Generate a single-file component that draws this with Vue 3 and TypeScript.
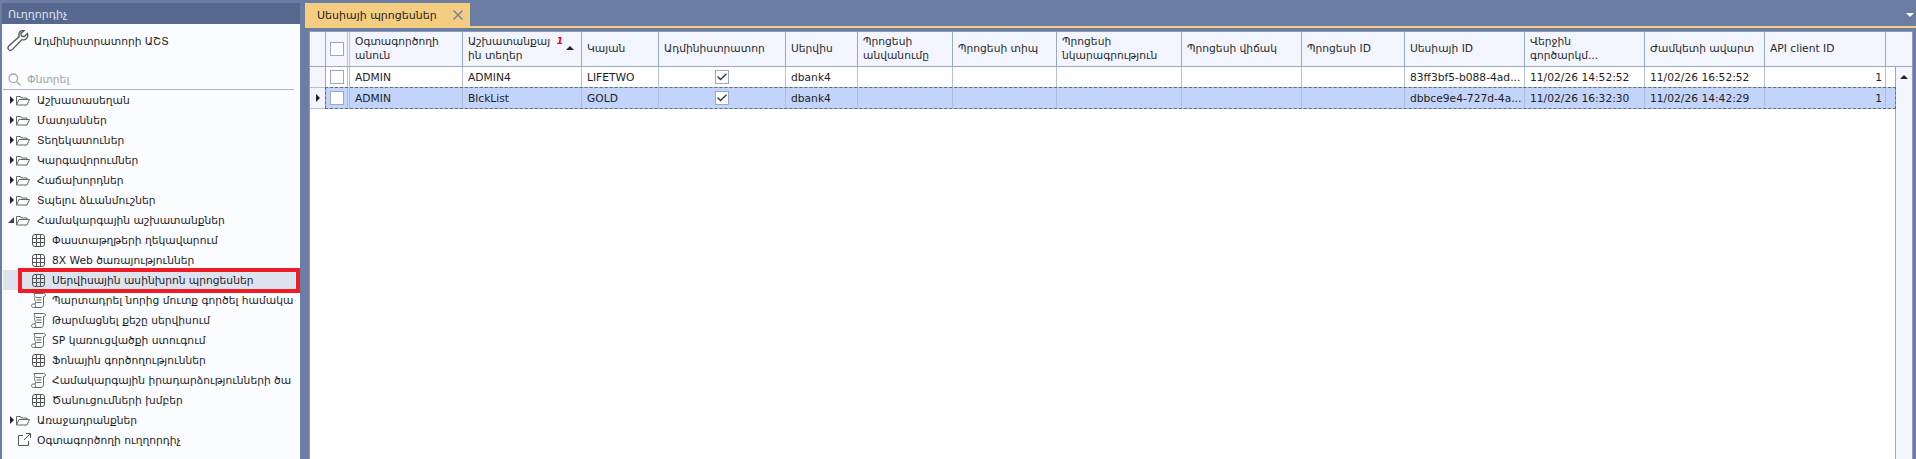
<script setup lang="ts">
interface Item { label: string; kind: 'folder' | 'open' | 'grid' | 'script' | 'link'; active?: boolean }
const items: Item[] = [
  { label: 'Աշխատասեղան', kind: 'folder' },
  { label: 'Մատյաններ', kind: 'folder' },
  { label: 'Տեղեկատուներ', kind: 'folder' },
  { label: 'Կարգավորումներ', kind: 'folder' },
  { label: 'Հաճախորդներ', kind: 'folder' },
  { label: 'Տպելու ձևանմուշներ', kind: 'folder' },
  { label: 'Համակարգային աշխատանքներ', kind: 'open' },
  { label: 'Փաստաթղթերի ղեկավարում', kind: 'grid' },
  { label: '8X Web ծառայություններ', kind: 'grid' },
  { label: 'Սերվիսային ասինխրոն պրոցեսներ', kind: 'grid', active: true },
  { label: 'Պարտադրել նորից մուտք գործել համակա', kind: 'script' },
  { label: 'Թարմացնել քեշը սերվիսում', kind: 'script' },
  { label: 'SP կառուցվածքի ստուգում', kind: 'script' },
  { label: 'Ֆոնային գործողություններ', kind: 'grid' },
  { label: 'Համակարգային իրադարձությունների ծա', kind: 'script' },
  { label: 'Ծանուցումների խմբեր', kind: 'grid' },
  { label: 'Առաջադրանքներ', kind: 'folder' },
  { label: 'Օգտագործողի ուղղորդիչ', kind: 'link' },
]
interface Col { w: number; title: string; sort?: boolean; check?: boolean; right?: boolean }
const cols: Col[] = [
  { w: 113, title: 'Օգտագործողի անուն' },
  { w: 119, title: 'Աշխատանքայ ին տեղեր', sort: true },
  { w: 77, title: 'Կայան' },
  { w: 127, title: 'Ադմինիստրատոր', check: true },
  { w: 72, title: 'Սերվիս' },
  { w: 95, title: 'Պրոցեսի անվանումը' },
  { w: 104, title: 'Պրոցեսի տիպ' },
  { w: 125, title: 'Պրոցեսի նկարագրություն' },
  { w: 120, title: 'Պրոցեսի վիճակ' },
  { w: 103, title: 'Պրոցեսի ID' },
  { w: 120, title: 'Սեսիայի ID' },
  { w: 120, title: 'Վերջին գործարկմ...' },
  { w: 120, title: 'Ժամկետի ավարտ' },
  { w: 121, title: 'API client ID', right: true },
]
const rows: string[][] = [
  ['ADMIN', 'ADMIN4', 'LIFETWO', '', 'dbank4', '', '', '', '', '', '83ff3bf5-b088-4ad...', '11/02/26 14:52:52', '11/02/26 16:52:52', '1'],
  ['ADMIN', 'BlckList', 'GOLD', '', 'dbank4', '', '', '', '', '', 'dbbce9e4-727d-4a...', '11/02/26 16:32:30', '11/02/26 14:42:29', '1'],
]
</script>

<template>
  <div class="app">
    <aside class="nav">
      <div class="nav-title">Ուղղորդիչ</div>
      <div class="nav-body">
        <div class="module">
          <svg width="22" height="22" viewBox="0 0 22 22" fill="none" stroke="#555" stroke-width="1.3"><path d="M20.500 3.500l-3.500 3.200-2.600-.7-.6-2.600L17.100.6c-2.600-.7-5.300 1-5.200 4 0 .8.2 1.400.4 1.900L2 15.800c-1.300 1.300-1.200 2.800-.3 3.800s2.600 1.100 3.800-.2l9.500-9.800c.7.3 1.300.4 2 .3 2.900-.2 4.300-3.600 3.500-6.400z"/></svg>
          <span>Ադմինիստրատորի ԱՇՏ</span>
        </div>
        <div class="search">
          <svg width="13" height="13" viewBox="0 0 13 13" fill="none" stroke="#a9a9a9" stroke-width="1.3"><circle cx="5.300" cy="5.300" r="4.300"/><path d="M8.500 8.500l4 4"/></svg>
          <span>Փնտրել</span>
        </div>
        <ul class="tree">
          <li v-for="it in items" :key="it.label" class="node" :class="['k-' + it.kind, { active: it.active }]">
            <i v-if="it.kind === 'folder'" class="arrow"></i>
            <i v-else-if="it.kind === 'open'" class="arrow-open"></i>
            <svg v-if="it.kind === 'folder' || it.kind === 'open'" class="ico" width="14" height="11" viewBox="0 0 14 11" fill="none" stroke="#666"><path d="M.5 10V1.500h4l1 1.500h5.500v1.500M.5 10h10.500l2.500-5.500H3z"/></svg>
            <svg v-else-if="it.kind === 'grid'" class="ico" width="13" height="13" viewBox="0 0 13 13" fill="none" stroke="#555"><rect x=".5" y=".5" width="12" height="12" rx="2.500"/><path d="M4.500 1v11M8.500 1v11M1 4.500h11M1 8.500h11"/></svg>
            <svg v-else-if="it.kind === 'script'" class="ico" width="15" height="15" viewBox="0 0 15 15" fill="none" stroke="#666"><path d="M3 .5h9.500c1.200 0 2 .8 2 1.700s-.8 1.300-2 1.300V11c0 2-1 3.500-2.500 3.500H2.500C1.300 14.500.5 13.700.5 12.700s.8-1.700 2-1.700H4c.8-1 .8-2.500 0-3.500-.6-1-.6-2.500 0-3.500-.3-.8-.3-2.500-1-3.500zM5 4.500h5.500M5.500 7h5M5.500 9.500h5M4 11c.8.8.8 2.500 0 3.500"/></svg>
            <svg v-else class="ico" width="14" height="14" viewBox="0 0 14 14" fill="none" stroke="#555"><path d="M6 2.500H1.500v10h10V8M7 7l6-6M9 .5h4.500V5"/></svg>
            <span class="label">{{ it.label }}</span>
          </li>
        </ul>
      </div>
    </aside>
    <main class="main">
      <div class="tabbar">
        <div class="tab">
          <span class="tab-text">Սեսիայի պրոցեսներ</span>
          <svg width="10" height="10" viewBox="0 0 10 10" fill="none" stroke="#7484a8" stroke-width="1.500"><path d="M.5.5l9 9M9.500.5l-9 9"/></svg>
        </div>
        <i class="menu"></i>
      </div>
      <div class="tabline"></div>
      <div class="page">
        <div class="grid">
          <div class="tr head">
            <div class="ind"></div>
            <div class="chk"><b class="box"></b></div>
            <div v-for="(c, i) in cols" :key="i" class="th" :class="{ 'th-sort': c.sort }" :style="{ width: c.w + 'px' }">
              <span class="th-text">{{ c.title }}</span>
              <template v-if="c.sort"><em class="badge">1</em><i class="sort"></i></template>
            </div>
            <div class="sb-head"></div>
          </div>
          <div class="body-wrap">
            <div class="rows">
              <div v-for="(r, ri) in rows" :key="ri" class="tr row">
                <div class="ind"><i v-if="ri === 1" class="cur"></i></div>
                <div class="row-main" :class="{ sel: ri === 1 }">
                  <div class="chk"><b class="box"></b></div>
                  <div v-for="(c, i) in cols" :key="i" class="td" :class="{ right: c.right, center: c.check }" :style="{ width: c.w + 'px' }">
                    <b v-if="c.check" class="box">
                      <svg width="10" height="8" viewBox="0 0 10 8" fill="none" stroke="#333" stroke-width="1.300"><path d="M.5 3.500l3 3L9.500.8"/></svg>
                    </b>
                    <template v-else>{{ r[i] }}</template>
                  </div>
                </div>
              </div>
            </div>
            <div class="scroll"><i class="up"></i></div>
          </div>
        </div>
      </div>
    </main>
  </div>
</template>

<style>
html, body { margin: 0; background: #6b7da3; overflow: hidden; }
</style>

<style scoped>
.app { width: 1916px; height: 459px; display: flex; background: #6b7da3; font-family: "DejaVu Sans", "Liberation Sans", sans-serif; font-size: 10.700px; color: #1e1e1e; overflow: hidden; box-sizing: border-box; padding-top: 3px; }
.nav { width: 298px; margin-left: 2px; margin-right: 5px; flex: none; display: flex; flex-direction: column; }
.nav-title { height: 21px; line-height: 23px; padding-left: 6px; background: #57688f; color: #dfe5f2; font-size: 11px; flex: none; }
.nav-body { flex: 1; background: #fbfcff; padding-left: 1px; overflow: hidden; }
.module { height: 34px; display: flex; align-items: center; padding-left: 4px; gap: 5px; }
.search { margin: 11px 0 0 0; width: 286px; height: 20px; border-bottom: 1px solid #a9b3c8; display: flex; align-items: center; padding-left: 5px; gap: 6px; color: #a0a0a0; box-sizing: content-box; }
.tree { list-style: none; margin: 0; padding: 0; }
.node { height: 20px; display: flex; align-items: center; white-space: nowrap; width: 292px; box-sizing: border-box; position: relative; }
.k-folder { padding-left: 7px; }
.k-open { padding-left: 5px; }
.k-grid { padding-left: 29px; }
.k-script { padding-left: 28px; }
.k-link { padding-left: 14px; }
.node .ico { flex: none; margin-right: 7px; }
.k-folder .ico, .k-open .ico { margin-left: 2px; }
.k-script .ico, .k-link .ico { margin-right: 6px; }
.label { flex: 1; min-width: 0; overflow: hidden; }
.arrow { width: 0; height: 0; border-left: 4px solid #222; border-top: 4px solid transparent; border-bottom: 4px solid transparent; flex: none; }
.arrow-open { width: 0; height: 0; border-right: 6px solid #444; border-top: 6px solid transparent; flex: none; }
.active { background: #dde3ee; }
.active::after { content: ""; position: absolute; left: 15px; top: -2px; width: 282px; height: 25px; box-sizing: border-box; border: 4px solid #ee1c25; }
.main { flex: 1; min-width: 0; display: flex; flex-direction: column; }
.tabbar { height: 23px; flex: none; display: flex; justify-content: space-between; }
.tab { width: 165px; height: 23px; background: #f5cd81; display: flex; align-items: center; justify-content: space-between; padding: 1px 7px 0 12px; box-sizing: border-box; font-size: 11px; }
.menu { width: 0; height: 0; border-top: 4px solid #fff; border-left: 4.500px solid transparent; border-right: 4.500px solid transparent; margin: 10px 2px 0 0; }
.tabline { height: 2px; background: #f5cd81; flex: none; }
.page { flex: 1; margin-right: 1px; padding: 3px 2px 0 4px; background: #6b7da3; display: flex; flex-direction: column; min-height: 0; }
.grid { flex: 1; background: #fff; border: 1px solid #8c9bbb; border-bottom: 0; display: flex; flex-direction: column; min-height: 0; }
.tr { display: flex; }
.head { height: 34px; box-sizing: content-box; background: #f2f5fd; border-bottom: 1px solid #9aa8c4; flex: none; }
.ind { width: 16px; flex: none; border-right: 1px solid #9aa8c4; box-sizing: border-box; display: flex; align-items: center; justify-content: center; background: #f2f5fd; }
.chk { width: 24px; flex: none; border-right: 3px double #b6c0d6; box-sizing: border-box; display: flex; align-items: center; justify-content: center; }
.box { width: 14px; height: 14px; box-sizing: border-box; border: 1px solid #9aa8c4; background: #fff; display: flex; align-items: center; justify-content: center; }
.th { flex: none; box-sizing: border-box; border-right: 1px solid #9aa8c4; padding: 0 5px; display: flex; align-items: center; position: relative; line-height: 14px; color: #2a2a2a; }
.th-sort { padding-right: 30px; }
.th-text { display: block; }
.sb-head { flex: 1; }
.badge { position: absolute; right: 18px; top: 3px; color: #e00; font-weight: bold; font-size: 9px; line-height: 12px; }
.sort { position: absolute; right: 7px; top: 14px; width: 0; height: 0; border-left: 4px solid transparent; border-right: 4px solid transparent; border-bottom: 4px solid #222; }
.body-wrap { display: flex; flex: 1; min-height: 0; }
.rows { flex: 1; min-width: 0; }
.row { height: 20px; box-sizing: content-box; border-bottom: 1px solid #b6c0d6; background: #fff; }
.row-main { flex: 1; min-width: 0; display: flex; position: relative; }
.sel { background: #c3d4fb; outline: 1px dashed #5f6a88; outline-offset: 0; }
.td { flex: none; box-sizing: border-box; border-right: 1px solid #b6c0d6; padding: 0 5px; white-space: nowrap; overflow: hidden; display: flex; align-items: center; }
.td.right { justify-content: flex-end; padding-right: 3px; }
.td.center { justify-content: center; }
.sel .td, .sel .chk { border-right-color: #aebdd9; }
.cur { width: 0; height: 0; border-left: 4px solid #222; border-top: 4px solid transparent; border-bottom: 4px solid transparent; }
.scroll { width: 17px; flex: none; display: flex; justify-content: center; padding-top: 8px; box-sizing: border-box; background: #f2f5fd; border-left: 1px solid #9aa8c4; }
.up { width: 0; height: 0; border-left: 4px solid transparent; border-right: 4px solid transparent; border-bottom: 4px solid #222; }
</style>
